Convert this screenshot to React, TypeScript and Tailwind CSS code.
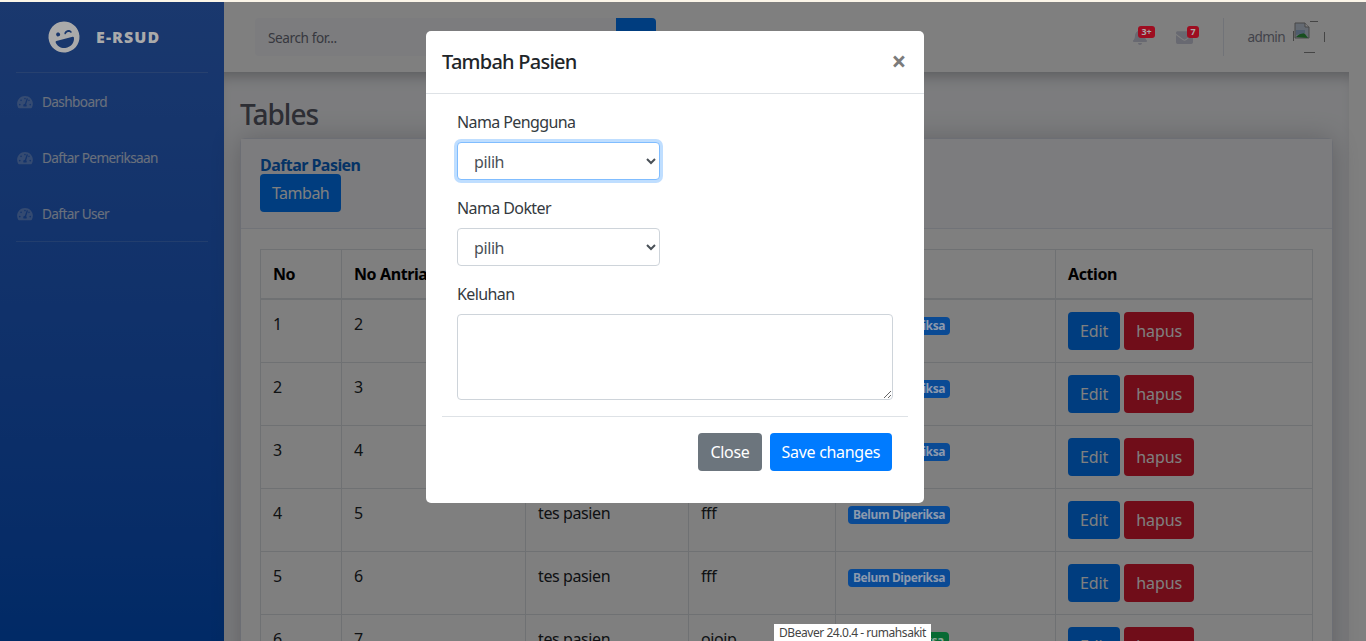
import React from 'react';
import { FaLaughWink, FaTachometerAlt, FaBell, FaEnvelope } from 'react-icons/fa';

const navItems = ['Dashboard', 'Daftar Pemeriksaan', 'Daftar User'];

const rows = [
  { no: 1, antrian: 2, nama: 'tes pasien', keluhan: 'fff', done: false },
  { no: 2, antrian: 3, nama: 'tes pasien', keluhan: 'fff', done: false },
  { no: 3, antrian: 4, nama: 'tes pasien', keluhan: 'fff', done: false },
  { no: 4, antrian: 5, nama: 'tes pasien', keluhan: 'fff', done: false },
  { no: 5, antrian: 6, nama: 'tes pasien', keluhan: 'fff', done: false },
  { no: 6, antrian: 7, nama: 'tes pasien', keluhan: 'ojojp', done: true },
];

const cell = 'border border-[#dee2e6] p-3 align-top';
const head = 'border border-b-2 border-[#dee2e6] p-3 text-left font-bold text-black';

const BrokenImage: React.FC = () => (
  <svg width="32" height="32" viewBox="0 0 32 32" fill="none">
    <path d="M0.5 10v10M31.5 11v10M11 31.5h11M17 0.5h8" stroke="#8a8a8a" strokeWidth="1" />
    <path d="M2 2h10l4 4v11H2z" fill="#c8d4e4" stroke="#8f8f8f" strokeWidth="1" />
    <path d="M12 2v4h4" fill="#ffffff" stroke="#8f8f8f" strokeWidth="1" />
    <path d="M3 16l6-5 3 2 3 4z" fill="#2e9e3e" />
    <path d="M3 9h9v3l-9 2z" fill="#9db8dc" />
  </svg>
);

const App: React.FC = () => {
  return (
    <div className="relative h-[641px] w-[1366px] overflow-hidden bg-white font-['Noto_Sans',sans-serif] text-[16px] leading-6 tracking-[-0.4px] text-[#212529]">
      <div className="relative z-[45] h-[2px] bg-[#fbf5e8]"></div>

      <div className="flex h-[639px]">
        {/* sidebar */}
        <aside className="flex w-[224px] shrink-0 flex-col bg-gradient-to-b from-[#3470dc] to-[#0254cc] px-4">
          <div className="flex h-[71px] items-center gap-[16px] border-b border-white/15 pl-[32px]">
            <FaLaughWink className="relative z-[45] -rotate-[15deg] text-[32px] text-[#aaaaaa]" />
            <span className="relative z-[45] text-[16px] font-black tracking-[1.1px] text-[#aaaaaa]">E-RSUD</span>
          </div>
          <nav className="border-b border-white/15">
            {navItems.map((item) => (
              <div key={item} className="flex h-[56px] items-center gap-[9px] pl-[1px] pt-[2px] text-[13.6px] tracking-[-0.6px] text-white/80">
                <FaTachometerAlt className="w-[16px] text-[14px] text-white/30" />
                <span>{item}</span>
              </div>
            ))}
          </nav>
        </aside>

        <div className="flex min-w-0 flex-1 flex-col">
          {/* topbar */}
          <header className="flex h-[70px] shrink-0 items-center justify-between bg-white pl-[31px] pr-[41px]">
            <div className="flex h-[38px]">
              <div className="flex w-[361px] items-center rounded-l bg-[#f8f9fc] pl-[13px] pt-[2px] text-[13.6px] text-[#6e707e]">Search for...</div>
              <div className="w-[40px] rounded-r bg-[#007bff]"></div>
            </div>
            <div className="flex items-center">
              <div className="relative mr-[28px] text-[#d1d3e2]">
                <FaBell className="text-[16px]" />
                <span className="absolute -top-[3px] left-[6px] z-[45] rounded-[3px] bg-[#9e0d20] px-[3px] text-[9px] font-bold leading-[12px] tracking-normal text-[#a9a9a9]">3+</span>
              </div>
              <div className="relative text-[#d1d3e2]">
                <FaEnvelope className="text-[17px]" />
                <span className="absolute -top-[3px] left-[11px] z-[45] rounded-[3px] bg-[#9e0d20] px-[3px] text-[9px] font-bold leading-[12px] tracking-normal text-[#a9a9a9]">7</span>
              </div>
              <div className="ml-[30px] mr-[23px] h-[38px] w-px bg-[#e3e6f0]"></div>
              <span className="text-[13.6px] tracking-[-0.6px] text-[#858796]">admin</span>
              <span className="ml-[8px]"><BrokenImage /></span>
            </div>
          </header>

          {/* content */}
          <main className="w-[1125px] flex-1 bg-[#f8f9fc] px-4 pt-[25px] shadow-[inset_0_12px_14px_-8px_rgba(58,59,69,0.35)]">
            <h1 className="mb-[7px] text-[28px] font-medium leading-[34px] tracking-[-1px] text-[#5a5c69]">Tables</h1>
            <section className="rounded-[5px] border border-[#d9dce8] bg-white shadow-[0_2px_28px_0_rgba(58,59,69,0.3)]">
              <div className="border-b border-[#e3e6f0] bg-[#f8f9fc] px-[19px] pb-4 pt-[18px]">
                <h6 className="text-[16px] font-bold leading-[17px] tracking-[-0.55px] text-[#0a66cc]">Daftar Pasien</h6>
                <button className="h-[38px] rounded bg-[#007bff] px-3 tracking-[-0.5px] text-white">Tambah</button>
              </div>
              <div className="px-[19px] pt-5">
                <table className="w-[1052px] table-fixed border-collapse">
                  <colgroup>
                    <col className="w-[81px]" />
                    <col className="w-[184px]" />
                    <col className="w-[163px]" />
                    <col className="w-[147px]" />
                    <col className="w-[220px]" />
                    <col className="w-[257px]" />
                  </colgroup>
                  <thead>
                    <tr>
                      <th className={head}>No</th>
                      <th className={head}>No Antrian</th>
                      <th className={head}>Nama Pasien</th>
                      <th className={head}>Keluhan</th>
                      <th className={head}>Status</th>
                      <th className={head}>Action</th>
                    </tr>
                  </thead>
                  <tbody>
                    {rows.map((row) => (
                      <tr key={row.no}>
                        <td className={cell}>{row.no}</td>
                        <td className={cell}>{row.antrian}</td>
                        <td className={cell}>{row.nama}</td>
                        <td className={cell}>{row.keluhan}</td>
                        <td className={cell}>
                          <span
                            className={
                              row.done
                                ? 'relative z-[45] inline-block rounded-[4px] bg-[#086a34] px-[5px] text-[12px] font-bold leading-[18px] text-[#8fa89a]'
                                : 'relative z-[45] inline-block rounded-[4px] bg-[#0a4a94] px-[5px] text-[12px] font-bold leading-[18px] text-[#8c99ad]'
                            }
                          >
                            {row.done ? 'Sudah Diperiksa' : 'Belum Diperiksa'}
                          </span>
                        </td>
                        <td className={cell}>
                          <div className="flex gap-1">
                            <button className="h-[38px] rounded bg-[#007bff] px-3 tracking-[-0.1px] text-white">Edit</button>
                            <button className="h-[38px] rounded bg-[#e01a32] px-3 tracking-[-0.1px] text-white">hapus</button>
                          </div>
                        </td>
                      </tr>
                    ))}
                  </tbody>
                </table>
              </div>
            </section>
          </main>
        </div>
      </div>

      {/* modal backdrop */}
      <div className="absolute inset-0 z-40 bg-black/50"></div>

      {/* modal */}
      <div className="absolute left-[426px] top-[31px] z-50 w-[498px] rounded-[5px] bg-white">
        <div className="flex h-[63px] items-center justify-between border-b border-[#dee2e6] pl-4 pr-[18px]">
          <h5 className="text-[20px] font-medium leading-[30px] tracking-[-0.75px] text-[#212529]">Tambah Pasien</h5>
          <span className="pb-[2px] text-[26px] font-bold leading-none text-[#7b7b7b]">×</span>
        </div>
        <div className="p-4">
          <div className="px-[15px]">
            <label className="mb-2 block tracking-[-0.6px] text-[#343a40]">Nama Pengguna</label>
            <select className="mb-4 block h-[38px] w-[203px] rounded border border-[#80bdff] bg-white px-3 pt-[2px] text-[#495057] shadow-[0_0_0_3px_rgba(0,123,255,0.25)]">
              <option>pilih</option>
            </select>
            <label className="mb-2 block tracking-[-0.6px] text-[#343a40]">Nama Dokter</label>
            <select className="mb-4 block h-[38px] w-[203px] rounded border border-[#ced4da] bg-white px-3 pt-[2px] text-[#495057]">
              <option>pilih</option>
            </select>
            <label className="mb-2 block tracking-[-0.6px] text-[#343a40]">Keluhan</label>
            <textarea className="mb-4 block h-[86px] w-[436px] rounded border border-[#ced4da] bg-white"></textarea>
          </div>
          <div className="flex justify-end gap-2 border-t border-[#dee2e6] p-4">
            <button className="h-[38px] rounded bg-[#6c757d] px-3 tracking-[-0.3px] text-white">Close</button>
            <button className="h-[38px] rounded bg-[#007bff] px-3 tracking-[-0.3px] text-white">Save changes</button>
          </div>
        </div>
      </div>

      {/* window tooltip */}
      <div className="absolute left-[774px] top-[624px] z-[60] flex h-[17px] w-[157px] items-center whitespace-nowrap bg-white pl-[5px] text-[12px] leading-none tracking-[-0.45px] text-[#444444]">
        DBeaver 24.0.4 - rumahsakit
      </div>
    </div>
  );
};

export default App;
